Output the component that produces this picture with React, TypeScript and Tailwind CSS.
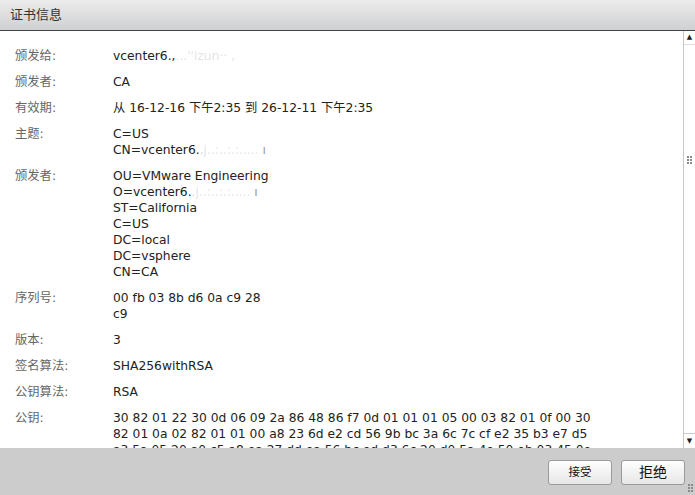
import React from 'react'

const font = { fontFamily: '"DejaVu Sans", Verdana, "Noto Sans CJK SC", sans-serif' }

function Blur({ children }: { children: React.ReactNode }) {
    return <span className="text-[#e4e4e4] [filter:blur(0.6px)]">{children}</span>
}

const rows: { label: string; lines: React.ReactNode[] }[] = [
    { label: '颁发给:', lines: [<>vcenter6.,<Blur>...''izun·· ,</Blur></>] },
    { label: '颁发者:', lines: ['CA'] },
    { label: '有效期:', lines: ['从 16-12-16 下午2:35 到 26-12-11 下午2:35'] },
    { label: '主题:', lines: ['C=US', <>CN=vcenter6.<Blur>,j..:..:.:.....</Blur> <span className="text-[#999]">ı</span></>] },
    {
        label: '颁发者:',
        lines: [
            'OU=VMware Engineering',
            <>O=vcenter6.<Blur>,j..:..:.:.....</Blur> <span className="text-[#999]">ı</span></>,
            'ST=California',
            'C=US',
            'DC=local',
            'DC=vsphere',
            'CN=CA',
        ],
    },
    { label: '序列号:', lines: ['00 fb 03 8b d6 0a c9 28', 'c9'] },
    { label: '版本:', lines: ['3'] },
    { label: '签名算法:', lines: ['SHA256withRSA'] },
    { label: '公钥算法:', lines: ['RSA'] },
    {
        label: '公钥:',
        lines: [
            '30 82 01 22 30 0d 06 09 2a 86 48 86 f7 0d 01 01 01 05 00 03 82 01 0f 00 30',
            '82 01 0a 02 82 01 01 00 a8 23 6d e2 cd 56 9b bc 3a 6c 7c cf e2 35 b3 e7 d5',
            'a3 5a 05 20 a0 c5 a8 ea 27 dd ea 56 bc ed d3 6c 20 d0 5a 4e 50 eb 03 45 0e',
        ],
    },
]

function Grip() {
    return (
        <div className="grid grid-cols-2 gap-[1px]">
            {[0, 1, 2, 3, 4, 5].map((i) => (
                <span key={i} className="w-[2px] h-[2px] bg-[#8a8a8a]" />
            ))}
        </div>
    )
}

export default function App() {
    return (
        <div className="w-[695px] h-[495px] flex flex-col bg-white overflow-hidden text-[#222]" style={font}>
            {/* HEADER */}
            <div className="h-[31px] shrink-0 flex items-center px-[10px] bg-gradient-to-b from-[#ececec] to-[#cfd0d2] border-b border-[#444]">
                <span className="text-[13px] text-[#333]">证书信息</span>
            </div>

            {/* CONTENT */}
            <div className="flex-1 flex min-h-0">
                <div className="flex-1 overflow-hidden pt-[17px] pl-[15px]">
                    <div className="flex flex-col gap-[10px]">
                        {rows.map((r, i) => (
                            <div key={i} className="flex text-[12.3px] leading-[16px]">
                                <div className="w-[98px] shrink-0 text-[#666]">{r.label}</div>
                                <div className="flex flex-col whitespace-nowrap">
                                    {r.lines.map((l, j) => (
                                        <div key={j}>{l}</div>
                                    ))}
                                </div>
                            </div>
                        ))}
                    </div>
                </div>

                {/* SCROLLBAR */}
                <div className="w-[12px] shrink-0 flex flex-col bg-white border-l border-[#c8c8c8]">
                    <div className="h-[14px] flex items-center justify-center bg-white border-b border-[#ddd] text-[7px] text-[#222]">▲</div>
                    <div className="h-[230px] flex items-center justify-center bg-white">
                        <Grip />
                    </div>
                    <div className="flex-1 bg-white border-b border-[#ccc]" />
                    <div className="h-[14px] flex items-center justify-center bg-white text-[7px] text-[#222]">▼</div>
                </div>
            </div>

            {/* FOOTER */}
            <div className="h-[47px] shrink-0 relative flex items-center justify-end gap-[9px] pr-[10px] pt-[2px] bg-[#cccccc]">
                <button className="w-[64px] h-[25px] rounded-[3px] border border-[#9a9a9a] bg-gradient-to-b from-white to-[#e6e6e6] text-[11.5px] text-[#111]">
                    接受
                </button>
                <button className="w-[64px] h-[25px] rounded-[3px] border border-[#9a9a9a] bg-gradient-to-b from-white to-[#e6e6e6] text-[14px] text-[#111]">
                    拒绝
                </button>
                <div className="absolute right-[2px] bottom-[3px]">
                    <Grip />
                </div>
            </div>
        </div>
    )
}
